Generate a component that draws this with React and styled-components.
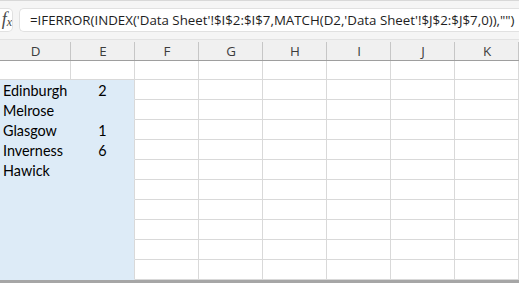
import React from "react";
import styled, { createGlobalStyle } from "styled-components";

const GlobalStyle = createGlobalStyle`
  html, body {
    margin: 0;
    padding: 0;
    background: #ffffff;
  }
`;

const columns = ["D", "E", "F", "G", "H", "I", "J", "K"];

const rows = [
  { d: "", e: "" },
  { d: "Edinburgh", e: "2", fill: true },
  { d: "Melrose", e: "", fill: true },
  { d: "Glasgow", e: "1", fill: true },
  { d: "Inverness", e: "6", fill: true },
  { d: "Hawick", e: "", fill: true },
  { d: "", e: "", fill: true },
  { d: "", e: "", fill: true },
  { d: "", e: "", fill: true },
  { d: "", e: "", fill: true },
  { d: "", e: "", fill: true },
];

const formula = `=IFERROR(INDEX('Data Sheet'!$I$2:$I$7,MATCH(D2,'Data Sheet'!$J$2:$J$7,0)),"")`;

function App() {
  return (
    <Screen>
      <GlobalStyle />
      <FormulaBar>
        <FxBox>
          <FxLabel>
            f<sub>x</sub>
          </FxLabel>
        </FxBox>
        <FormulaInput>{formula}</FormulaInput>
      </FormulaBar>
      <Sheet>
        {columns.map((c) => (
          <ColHeader key={c}>{c}</ColHeader>
        ))}
        {rows.map((row, r) =>
          columns.map((c, i) => {
            const filled = row.fill && i < 2;
            return (
              <Cell
                key={r + c}
                $fill={filled}
                $center={i === 1}
                $lastFill={filled && i === 1}
              >
                {i === 0 ? row.d : i === 1 ? row.e : ""}
              </Cell>
            );
          })
        )}
      </Sheet>
      <BottomBar />
    </Screen>
  );
}

const Screen = styled.div`
  width: 519px;
  height: 283px;
  overflow: hidden;
  display: flex;
  flex-direction: column;
  background: #ffffff;
`;

const FormulaBar = styled.div`
  height: 40px;
  box-sizing: border-box;
  border-top: 1px solid #d8d8d8;
  background: #f5f5f5;
  display: flex;
  align-items: center;
  gap: 6px;
  padding: 0 0 1px 0;
`;

const FxBox = styled.div`
  width: 13px;
  height: 24px;
  box-sizing: border-box;
  background: #ffffff;
  border: 1px solid #e1e1e1;
  border-left: none;
  border-radius: 0 5px 5px 0;
  display: flex;
  align-items: center;
  justify-content: flex-end;
  overflow: hidden;
`;

const FxLabel = styled.span`
  font-family: "Liberation Serif", serif;
  font-style: italic;
  font-size: 18px;
  color: #4a4a4a;
  white-space: nowrap;

  sub {
    font-size: 12px;
    vertical-align: -1px;
  }
`;

const FormulaInput = styled.div`
  flex: 1;
  min-width: 0;
  height: 24px;
  box-sizing: border-box;
  background: #ffffff;
  border: 1px solid #e1e1e1;
  border-right: none;
  border-radius: 5px 0 0 5px;
  padding-left: 10px;
  font-family: "Open Sans", sans-serif;
  font-size: 13.3px;
  line-height: 22px;
  color: #1e1e1e;
  white-space: nowrap;
  overflow: hidden;
`;

const Sheet = styled.div`
  display: grid;
  grid-template-columns: 71px repeat(7, 64px);
  grid-template-rows: 22px 19px repeat(10, 20px);
`;

const ColHeader = styled.div`
  box-sizing: border-box;
  background: #f0f0f0;
  border-bottom: 1px solid #9e9e9e;
  border-top: 1px solid #e2e2e2;
  position: relative;
  display: flex;
  align-items: center;
  justify-content: center;
  font-family: "Open Sans", sans-serif;
  font-size: 13.4px;
  color: #3c3c3c;
  padding-top: 1px;

  &::after {
    content: "";
    position: absolute;
    right: 0;
    top: 2px;
    bottom: 0;
    width: 1px;
    background: #c6c6c6;
  }
`;

const Cell = styled.div`
  box-sizing: border-box;
  background: ${(p) => (p.$fill ? "#ddebf7" : "#ffffff")};
  border-right: 1px solid ${(p) => (p.$fill && !p.$lastFill ? "#ddebf7" : "#d9d9d9")};
  border-bottom: 1px solid ${(p) => (p.$fill ? "#ddebf7" : "#d9d9d9")};
  font-family: "Lato", sans-serif;
  font-size: 14.4px;
  color: #000000;
  padding: 2px 3px 0;
  line-height: 18px;
  text-align: ${(p) => (p.$center ? "center" : "left")};
  white-space: nowrap;
`;

const BottomBar = styled.div`
  height: 3px;
  background: #a6a6a6;
`;

export default App;
